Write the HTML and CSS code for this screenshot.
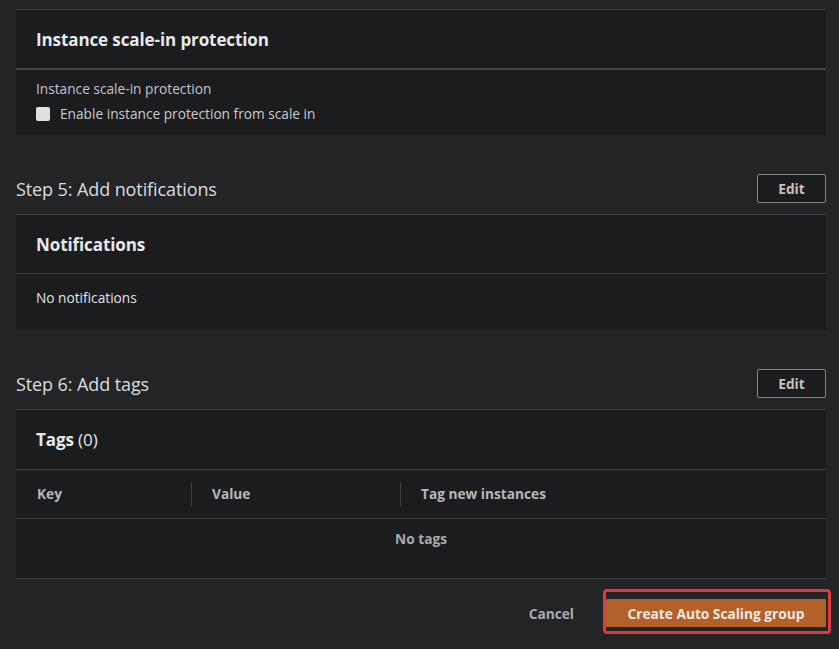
FILE: index.html
```html
<!DOCTYPE html>
<html>
<head>
<meta charset="utf-8">
<link rel="stylesheet" href="styles.css">
</head>
<body>
<div class="page">
  <section class="card first">
    <div class="card-head thick"><h2>Instance scale-in protection</h2></div>
    <div class="card-body">
      <div class="label">Instance scale-in protection</div>
      <label class="check"><span class="box"></span><span>Enable instance protection from scale in</span></label>
    </div>
  </section>

  <div class="step">
    <h1>Step 5: Add notifications</h1>
    <button class="edit">Edit</button>
  </div>
  <section class="card">
    <div class="card-head"><h2>Notifications</h2></div>
    <div class="card-body plain">No notifications</div>
  </section>

  <div class="step">
    <h1>Step 6: Add tags</h1>
    <button class="edit">Edit</button>
  </div>
  <section class="card tags">
    <div class="card-head tall"><h2>Tags <span class="count">(0)</span></h2></div>
    <div class="thead">
      <div class="th c1">Key</div>
      <div class="th c2">Value</div>
      <div class="th c3">Tag new instances</div>
    </div>
    <div class="empty">No tags</div>
  </section>

  <div class="footer">
    <button class="cancel">Cancel</button>
    <div class="highlight"><button class="primary">Create Auto Scaling group</button></div>
  </div>
</div>
</body>
</html>
```

FILE: styles.css
```css
* { box-sizing: border-box; }
html, body { margin: 0; padding: 0; }
body {
  background: #232426;
  font-family: "Open Sans", "Noto Sans", sans-serif;
  color: #d5dbdb;
  width: 839px;
  height: 649px;
  overflow: hidden;
}
.page {
  padding: 9px 13px 0 16px;
}
.card {
  background: #1b1c1e;
  border-top: 1px solid #3f4042;
}
.card-head {
  height: 59px;
  display: flex;
  align-items: center;
  padding: 0 20px;
  border-bottom: 1px solid #3f4042;
}
.card-head.tall { height: 60px; }
.card-head.thick {
  height: 60px;
  border-bottom: 2px solid #414244;
}
.card-head h2 {
  margin: 0;
  font-size: 17px;
  font-weight: 700;
  color: #e6e8e9;
  letter-spacing: -0.1px;
}
.count { font-weight: 400; }
.card-body {
  padding: 9px 20px 11px;
}
.label {
  font-size: 13.7px;
  line-height: 20px;
  color: #c3c6c7;
}
.check {
  display: flex;
  align-items: center;
  gap: 10px;
  margin-top: 5px;
  font-size: 13.7px;
  line-height: 20px;
  color: #c8cccc;
}
.box {
  width: 14px;
  height: 14px;
  background: #dde1e1;
  border-radius: 2px;
}
.card-body.plain {
  height: 56px;
  padding: 14px 20px 0;
  font-size: 13.7px;
  line-height: 20px;
  color: #e2e4e5;
}
.step {
  display: flex;
  align-items: center;
  justify-content: space-between;
  margin-top: 39px;
  padding-bottom: 11px;
}
.step h1 {
  margin: 0;
  font-size: 18px;
  font-weight: 400;
  color: #d9dddd;
  letter-spacing: -0.1px;
}
.edit {
  width: 69px;
  height: 29px;
  background: #1b1c1e;
  border: 1px solid #8a857b;
  border-radius: 2px;
  color: #c8c2b6;
  font-family: inherit;
  font-size: 13.7px;
  font-weight: 700;
  padding: 0;
}
.thead {
  display: flex;
  height: 49px;
  align-items: center;
  border-bottom: 1px solid #3f4042;
}
.th {
  font-size: 13.7px;
  font-weight: 700;
  color: #b4b8b8;
  padding-left: 21px;
  line-height: 24px;
}
.c1 { width: 175px; }
.c2 { width: 209px; border-left: 1px solid #404143; padding-left: 20px; }
.c3 { border-left: 1px solid #404143; padding-left: 20px; }
.empty {
  height: 60px;
  padding-top: 10px;
  text-align: center;
  font-size: 13.7px;
  font-weight: 700;
  line-height: 20px;
  color: #a7abab;
  border-bottom: 1px solid #3f4042;
}
.footer {
  display: flex;
  justify-content: flex-end;
  align-items: center;
  margin-top: 10px;
  margin-right: -5px;
}
.cancel {
  background: none;
  border: 0;
  color: #a7aeb0;
  font-family: inherit;
  font-size: 13.7px;
  font-weight: 700;
  margin-right: 29px;
  padding: 4px 0 0;
}
.highlight {
  border: 3px solid #e2383f;
  border-radius: 4px;
  padding: 7px 3px 4px 0;
  width: 228px;
  height: 45px;
}
.primary {
  display: block;
  width: 220px;
  height: 28px;
  background: #b3612a;
  border: 0;
  border-radius: 1px;
  color: #f1e9e1;
  font-family: inherit;
  font-size: 13.7px;
  font-weight: 700;
  padding: 0;
}
```
